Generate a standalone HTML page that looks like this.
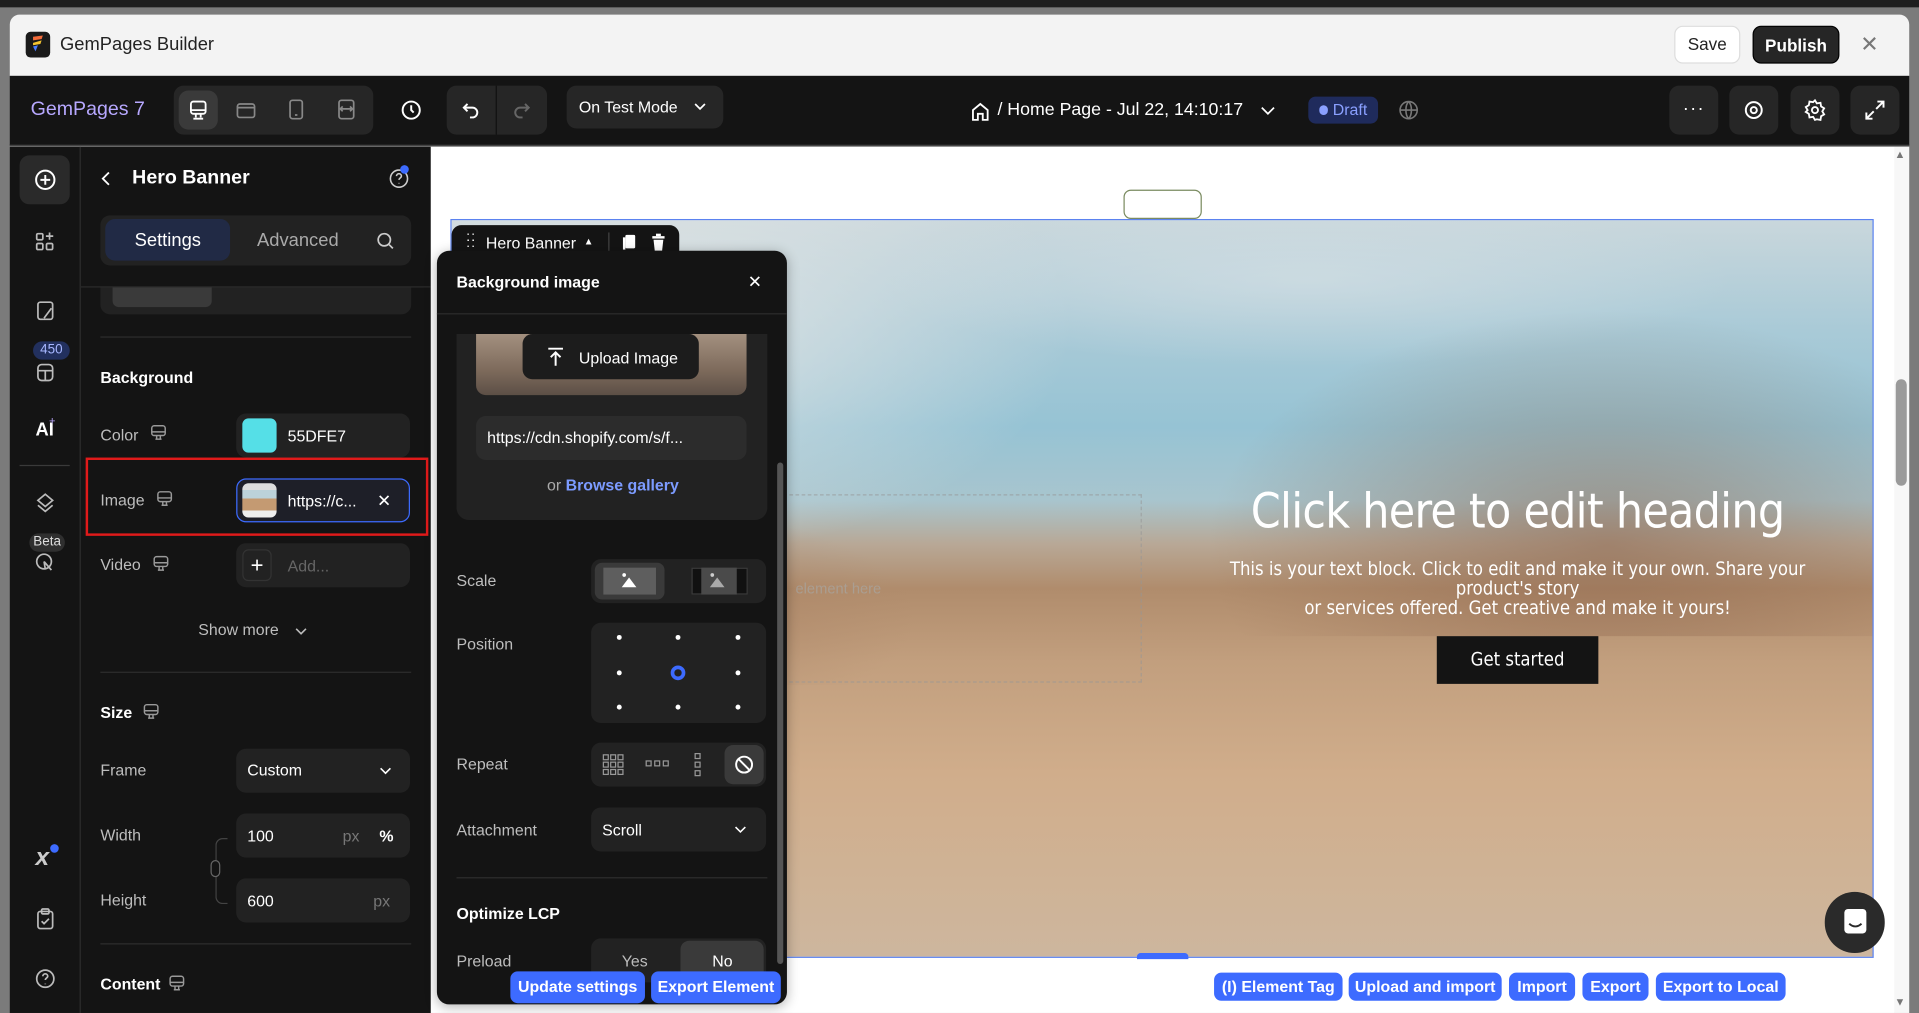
<!DOCTYPE html>
<html><head><meta charset="utf-8">
<style>
*{box-sizing:border-box;margin:0;padding:0}
html,body{width:1919px;height:1013px;overflow:hidden;background:#7a7a7a;font-family:"Liberation Sans",sans-serif}
#w{position:absolute;left:0;top:0;width:1568px;height:828px;transform:scale(1.22385,1.2234);transform-origin:0 0;background:#7b7b7b}
.a{position:absolute}
.t{color:#fff;font-size:13px}
.g{color:#bdbdbd;font-size:13px}
.box{position:absolute;background:#232323;border-radius:8px}
svg{position:absolute}
.btn{position:absolute;background:#3d6bff;color:#fff;font-size:13px;border-radius:6px;height:23px;line-height:23px;text-align:center;font-weight:bold}
.dot{position:absolute;width:4px;height:4px;border-radius:2px;background:#fff}
</style></head><body><div id="w">
<div class="a" style="left:0;top:0;width:1568px;height:6px;background:#1e1e1e"></div>
<div class="a" style="left:8px;top:12px;width:1552px;height:50px;background:#f3f3f3;border-radius:8px 8px 0 0"></div>
<div class="a" style="left:21px;top:26px;width:20px;height:21px;background:#1a1a1a;border-radius:4px"></div>
<svg style="left:24px;top:28px" width="14" height="16" viewBox="0 0 14 16"><path d="M3 2 L11 1 L10 4 L3 5Z" fill="#f36b3a"/><path d="M3 7 L10 5 L9 8 L3 9Z" fill="#f5c531"/><path d="M3 10 L7 9 L5 14Z" fill="#4a7cff"/></svg>
<div class="a" style="left:49px;top:28px;font-size:15px;color:#222">GemPages Builder</div>
<div class="a" style="left:1368px;top:21px;width:54px;height:31px;background:#fff;border:1px solid #ddd;border-radius:7px;font-size:14px;color:#222;text-align:center;line-height:29px">Save</div>
<div class="a" style="left:1432px;top:21px;width:71px;height:31px;background:#262626;border-radius:7px;font-size:14px;color:#fff;font-weight:bold;text-align:center;line-height:31px;border:1px solid #000">Publish</div>
<div class="a" style="left:1520px;top:26px;font-size:18px;color:#777">✕</div>
<div class="a" style="left:8px;top:62px;width:1552px;height:57px;background:#141414;border-bottom:1px solid #2b2b2b"></div>
<div class="a" style="left:25px;top:81px;font-size:16px;color:#b7a8ff">GemPages 7</div>
<div class="box" style="left:142px;top:70px;width:163px;height:40px;background:#262626"></div>
<div class="box" style="left:146px;top:74px;width:32px;height:32px;background:#3a3a3a"></div>
<svg style="left:152px;top:80px" width="20" height="20" viewBox="0 0 20 20" fill="none" stroke="#fff" stroke-width="1.5"><rect x="4" y="3" width="12" height="10" rx="2"/><path d="M4 10h12M8 13v3M12 13v3M6 17h8"/></svg>
<svg style="left:192px;top:81px" width="18" height="18" viewBox="0 0 18 18" fill="none" stroke="#888" stroke-width="1.4"><rect x="2" y="4" width="14" height="11" rx="2"/><path d="M2 7h14"/></svg>
<svg style="left:234px;top:80px" width="16" height="20" viewBox="0 0 16 20" fill="none" stroke="#888" stroke-width="1.4"><rect x="3" y="2" width="10" height="15" rx="2"/><path d="M7 14h2"/></svg>
<svg style="left:274px;top:80px" width="18" height="20" viewBox="0 0 18 20" fill="none" stroke="#888" stroke-width="1.4"><rect x="3" y="2" width="12" height="15" rx="2"/><path d="M5 9h8M6 7l-2 2 2 2M12 7l2 2-2 2"/></svg>
<svg style="left:326px;top:80px" width="20" height="20" viewBox="0 0 20 20" fill="none" stroke="#fff" stroke-width="1.6"><circle cx="10" cy="10" r="7"/><path d="M10 6v4l2 2"/></svg>
<div class="box" style="left:365px;top:70px;width:82px;height:40px;background:#262626"></div>
<div class="a" style="left:405px;top:70px;width:1px;height:40px;background:#111"></div>
<svg style="left:375px;top:80px" width="20" height="20" viewBox="0 0 20 20" fill="none" stroke="#fff" stroke-width="1.6"><path d="M7 5L4 8l3 3M4 8h7a4 4 0 010 8H9"/></svg>
<svg style="left:416px;top:80px" width="20" height="20" viewBox="0 0 20 20" fill="none" stroke="#666" stroke-width="1.6"><path d="M13 5l3 3-3 3M16 8H9a4 4 0 000 8h2"/></svg>
<div class="box" style="left:463px;top:70px;width:128px;height:35px;background:#262626"></div>
<div class="a t" style="left:473px;top:80px">On Test Mode</div>
<svg style="left:566px;top:82px" width="12" height="10" viewBox="0 0 12 10" fill="none" stroke="#fff" stroke-width="1.4"><path d="M2 3l4 4 4-4"/></svg>
<svg style="left:793px;top:82px" width="16" height="18" viewBox="0 0 16 18" fill="none" stroke="#fff" stroke-width="1.5"><path d="M2 8l6-5 6 5v8H10v-5H6v5H2z"/></svg>
<div class="a" style="left:815px;top:82px;font-size:14.5px;color:#fff">/ Home Page - Jul 22, 14:10:17</div>
<svg style="left:1029px;top:85px" width="14" height="10" viewBox="0 0 14 10" fill="none" stroke="#fff" stroke-width="1.4"><path d="M2 3l5 5 5-5"/></svg>
<div class="a" style="left:1069px;top:79px;width:57px;height:22px;background:#1f2b5c;border-radius:6px"></div>
<div class="a" style="left:1078px;top:86px;width:7px;height:8px;border-radius:4px;background:#8aa0ff"></div>
<div class="a" style="left:1089px;top:82px;font-size:13px;color:#8aa0ff">Draft</div>
<svg style="left:1142px;top:80px" width="18" height="20" viewBox="0 0 18 20" fill="none" stroke="#777" stroke-width="1.3"><circle cx="9" cy="10" r="7"/><path d="M2 10h14M9 3c-3 3-3 11 0 14M9 3c3 3 3 11 0 14"/></svg>
<div class="box" style="left:1364px;top:70px;width:40px;height:40px;background:#262626"></div>
<div class="a" style="left:1375px;top:80px;color:#fff;font-size:15px;letter-spacing:1px">···</div>
<div class="box" style="left:1413px;top:70px;width:40px;height:40px;background:#262626"></div>
<svg style="left:1423px;top:80px" width="20" height="20" viewBox="0 0 20 20" fill="none" stroke="#fff" stroke-width="1.6"><circle cx="10" cy="10" r="6.5"/><circle cx="10" cy="10" r="2.5"/></svg>
<div class="box" style="left:1463px;top:70px;width:40px;height:40px;background:#262626"></div>
<svg style="left:1473px;top:80px" width="20" height="20" viewBox="0 0 20 20" fill="none" stroke="#fff" stroke-width="1.5"><circle cx="10" cy="10" r="2.5"/><path d="M10 2l1.5 2.5 3-.5.5 3 2.5 1.5-1.5 2.5 1.5 2.5-2.5 1.5-.5 3-3-.5L10 18l-1.5-2.5-3 .5-.5-3L2.5 11.5 4 10 2.5 7.5 5 6l.5-3 3 .5z"/></svg>
<div class="box" style="left:1512px;top:70px;width:40px;height:40px;background:#262626"></div>
<svg style="left:1522px;top:80px" width="20" height="20" viewBox="0 0 20 20" fill="none" stroke="#fff" stroke-width="1.6"><path d="M12 3h5v5M17 3l-6 6M8 17H3v-5M3 17l6-6"/></svg>
<div class="a" style="left:8px;top:120px;width:58px;height:708px;background:#141414;border-right:1px solid #2b2b2b"></div>
<div class="box" style="left:16px;top:127px;width:41px;height:40px;background:#2a2a2a"></div>
<svg style="left:27px;top:137px" width="20" height="20" viewBox="0 0 20 20" fill="none" stroke="#fff" stroke-width="1.6"><circle cx="10" cy="10" r="7.5"/><path d="M10 6v8M6 10h8"/></svg>
<svg style="left:28px;top:188px" width="18" height="18" viewBox="0 0 18 18" fill="none" stroke="#bbb" stroke-width="1.4"><rect x="2" y="3" width="5" height="5" rx="1"/><rect x="2" y="11" width="5" height="5" rx="1"/><rect x="10" y="11" width="5" height="5" rx="1"/><path d="M12.5 2v6M9.5 5h6"/></svg>
<svg style="left:28px;top:245px" width="18" height="18" viewBox="0 0 18 18" fill="none" stroke="#bbb" stroke-width="1.4"><rect x="3" y="2" width="12" height="14" rx="2"/><path d="M8 15l6-8"/></svg>
<div class="a" style="left:27px;top:279px;width:30px;height:15px;background:#22305e;border-radius:8px;color:#a6b6ff;font-size:11px;text-align:center;line-height:15px">450</div>
<svg style="left:28px;top:295px" width="18" height="18" viewBox="0 0 18 18" fill="none" stroke="#bbb" stroke-width="1.4"><rect x="3" y="3" width="12" height="13" rx="3"/><path d="M3 8h12M9 8v8"/></svg>
<div class="a" style="left:29px;top:343px;color:#fff;font-size:15px;font-weight:bold">AI</div>
<div class="a" style="left:40px;top:339px;color:#bda9ff;font-size:9px">+</div>
<div class="a" style="left:16px;top:380px;width:41px;height:1px;background:#3a3a3a"></div>
<svg style="left:28px;top:402px" width="18" height="18" viewBox="0 0 18 18" fill="none" stroke="#bbb" stroke-width="1.4"><path d="M9 2l6 5-6 5-6-5zM3 11l6 5 6-5"/></svg>
<div class="a" style="left:24px;top:436px;width:29px;height:15px;background:#2f2f2f;border-radius:8px;color:#ddd;font-size:11px;text-align:center;line-height:15px">Beta</div>
<svg style="left:28px;top:451px" width="18" height="18" viewBox="0 0 18 18" fill="none" stroke="#bbb" stroke-width="1.4"><circle cx="8" cy="8" r="6"/><path d="M8 8l6 7M8 8l1 6"/></svg>
<div class="a" style="left:29px;top:690px;color:#ccc;font-size:20px;font-weight:bold;font-style:italic">x</div>
<div class="a" style="left:41px;top:690px;width:7px;height:7px;border-radius:4px;background:#3d6bff"></div>
<svg style="left:28px;top:741px" width="18" height="20" viewBox="0 0 18 20" fill="none" stroke="#bbb" stroke-width="1.4"><rect x="3" y="4" width="12" height="14" rx="2"/><rect x="6" y="2" width="6" height="4" rx="1"/><path d="M6 12l2 2 4-4"/></svg>
<svg style="left:28px;top:791px" width="18" height="18" viewBox="0 0 18 18" fill="none" stroke="#bbb" stroke-width="1.4"><circle cx="9" cy="9" r="7"/><path d="M7 7a2 2 0 114 0c0 1.5-2 1.5-2 3M9 13v.5"/></svg>
<div class="a" style="left:66px;top:120px;width:286px;height:708px;background:#141414"></div>
<svg style="left:80px;top:139px" width="14" height="14" viewBox="0 0 14 14" fill="none" stroke="#fff" stroke-width="1.5"><path d="M9 2L4 7l5 5"/></svg>
<div class="a" style="left:108px;top:137px;font-size:16px;color:#fff;font-weight:bold">Hero Banner</div>
<svg style="left:317px;top:137px" width="18" height="18" viewBox="0 0 18 18" fill="none" stroke="#ccc" stroke-width="1.3"><circle cx="9" cy="9" r="7"/><path d="M7 7a2 2 0 114 0c0 1.5-2 1.5-2 3M9 12.5v.5"/></svg>
<div class="a" style="left:327px;top:135px;width:7px;height:7px;border-radius:4px;background:#3d6bff"></div>
<div class="box" style="left:82px;top:176px;width:254px;height:41px;background:#222"></div>
<div class="box" style="left:86px;top:179px;width:102px;height:34px;background:#212a45"></div>
<div class="a" style="left:110px;top:188px;font-size:15px;color:#fff">Settings</div>
<div class="a" style="left:210px;top:188px;font-size:15px;color:#aaa">Advanced</div>
<svg style="left:307px;top:189px" width="16" height="16" viewBox="0 0 16 16" fill="none" stroke="#ccc" stroke-width="1.4"><circle cx="7" cy="7" r="5"/><path d="M11 11l3 3"/></svg>
<div class="a" style="left:66px;top:234px;width:286px;height:1px;background:#2b2b2b"></div>
<div class="box" style="left:82px;top:235px;width:254px;height:22px;background:#222;border-radius:0 0 8px 8px"></div>
<div class="a" style="left:92px;top:235px;width:81px;height:16px;background:#3a3a3a;border-radius:0 0 5px 5px"></div>
<div class="a" style="left:82px;top:275px;width:254px;height:1px;background:#2e2e2e"></div>
<div class="a t" style="left:82px;top:301px;font-weight:bold">Background</div>
<div class="a g" style="left:82px;top:348px">Color</div>
<svg style="left:122px;top:346px" width="15" height="15" viewBox="0 0 15 15" fill="none" stroke="#999" stroke-width="1.2"><rect x="2" y="2" width="11" height="8" rx="2"/><path d="M2 7h11M6 10v3M9 10v3M5 13h5"/></svg>
<div class="box" style="left:193px;top:338px;width:142px;height:36px;background:#222"></div>
<div class="a" style="left:198px;top:342px;width:28px;height:28px;background:#55dfe7;border-radius:5px"></div>
<div class="a t" style="left:235px;top:349px">55DFE7</div>
<div class="a" style="left:70px;top:374px;width:280px;height:64px;border:2px solid #e01a1a"></div>
<div class="a g" style="left:82px;top:401px">Image</div>
<svg style="left:127px;top:400px" width="15" height="15" viewBox="0 0 15 15" fill="none" stroke="#999" stroke-width="1.2"><rect x="2" y="2" width="11" height="8" rx="2"/><path d="M2 7h11M6 10v3M9 10v3M5 13h5"/></svg>
<div class="a" style="left:193px;top:391px;width:142px;height:36px;background:#1e1f28;border:1px solid #3d6bff;border-radius:8px"></div>
<div class="a" style="left:198px;top:395px;width:28px;height:28px;border-radius:5px;background:linear-gradient(#ddd 0 20%,#bcd2da 20% 45%,#c49a72 45% 80%,#eee 80%)"></div>
<div class="a t" style="left:235px;top:402px">https://c...</div>
<div class="a t" style="left:308px;top:401px;font-size:14px">✕</div>
<div class="a g" style="left:82px;top:454px">Video</div>
<svg style="left:124px;top:453px" width="15" height="15" viewBox="0 0 15 15" fill="none" stroke="#999" stroke-width="1.2"><rect x="2" y="2" width="11" height="8" rx="2"/><path d="M2 7h11M6 10v3M9 10v3M5 13h5"/></svg>
<div class="box" style="left:193px;top:444px;width:142px;height:36px;background:#222"></div>
<div class="a" style="left:198px;top:449px;width:24px;height:26px;border:1px solid #333;border-radius:5px;color:#fff;font-size:18px;text-align:center;line-height:24px">+</div>
<div class="a" style="left:235px;top:455px;font-size:13px;color:#666">Add...</div>
<div class="a g" style="left:162px;top:507px">Show more</div>
<svg style="left:240px;top:511px" width="12" height="10" viewBox="0 0 12 10" fill="none" stroke="#bbb" stroke-width="1.3"><path d="M2 3l4 4 4-4"/></svg>
<div class="a" style="left:82px;top:549px;width:254px;height:1px;background:#2e2e2e"></div>
<div class="a t" style="left:82px;top:575px;font-weight:bold">Size</div>
<svg style="left:116px;top:574px" width="15" height="15" viewBox="0 0 15 15" fill="none" stroke="#999" stroke-width="1.2"><rect x="2" y="2" width="11" height="8" rx="2"/><path d="M2 7h11M6 10v3M9 10v3M5 13h5"/></svg>
<div class="a g" style="left:82px;top:622px">Frame</div>
<div class="box" style="left:193px;top:612px;width:142px;height:36px;background:#222"></div>
<div class="a t" style="left:202px;top:622px">Custom</div>
<svg style="left:309px;top:625px" width="12" height="10" viewBox="0 0 12 10" fill="none" stroke="#fff" stroke-width="1.3"><path d="M2 3l4 4 4-4"/></svg>
<div class="a g" style="left:82px;top:675px">Width</div>
<div class="box" style="left:193px;top:665px;width:142px;height:36px;background:#222"></div>
<div class="a t" style="left:202px;top:676px">100</div>
<div class="a" style="left:280px;top:676px;font-size:13px;color:#777">px</div>
<div class="a t" style="left:310px;top:676px;font-weight:bold">%</div>
<div class="a" style="left:176px;top:685px;width:10px;height:54px;border:1px solid #444;border-right:none;border-radius:6px 0 0 6px"></div>
<div class="a" style="left:172px;top:703px;width:8px;height:14px;border:1px solid #666;border-radius:4px;background:#141414"></div>
<div class="a g" style="left:82px;top:728px">Height</div>
<div class="box" style="left:193px;top:718px;width:142px;height:36px;background:#222"></div>
<div class="a t" style="left:202px;top:729px">600</div>
<div class="a" style="left:305px;top:729px;font-size:13px;color:#777">px</div>
<div class="a" style="left:82px;top:771px;width:254px;height:1px;background:#2e2e2e"></div>
<div class="a t" style="left:82px;top:797px;font-weight:bold">Content</div>
<svg style="left:137px;top:796px" width="15" height="15" viewBox="0 0 15 15" fill="none" stroke="#999" stroke-width="1.2"><rect x="2" y="2" width="11" height="8" rx="2"/><path d="M2 7h11M6 10v3M9 10v3M5 13h5"/></svg>
<div class="a" style="left:352px;top:120px;width:1196px;height:708px;background:#fff"></div>
<div class="a" style="left:1548px;top:120px;width:12px;height:708px;background:#f7f7f7"></div>
<div class="a" style="left:1549px;top:310px;width:9px;height:87px;background:#9a9a9a;border-radius:5px"></div>
<div class="a" style="left:1548px;top:121px;font-size:9px;color:#777">▲</div>
<div class="a" style="left:1548px;top:814px;font-size:9px;color:#777">▼</div>
<div class="a" style="left:918px;top:155px;width:64px;height:24px;border:1px solid #7a8b60;border-radius:6px"></div>
<div class="a" style="left:368px;top:179px;width:1163px;height:604px;border:1px solid #5b82f0;overflow:hidden;background:linear-gradient(180deg,#c9d7dc 0%,#a9cad7 15%,#96c3d4 28%,#a8c5ce 38%,#b8a896 44%,#b08c6c 50%,#c29f7e 60%,#d0ad8b 75%,#cfb396 90%,#cdb69e 100%)">
<div class="a" style="left:-50px;top:-20px;width:560px;height:300px;background:radial-gradient(ellipse at 35% 35%,rgba(226,229,229,.95),rgba(220,225,226,0) 70%)"></div>
<div class="a" style="left:350px;top:0;width:700px;height:120px;background:radial-gradient(ellipse at 50% 40%,rgba(215,225,230,.6),rgba(215,225,230,0) 70%)"></div>
<div class="a" style="left:560px;top:40px;width:640px;height:300px;background:radial-gradient(ellipse at 60% 75%,rgba(140,100,75,.55),rgba(140,100,75,0) 60%)"></div>
<div class="a" style="left:0;top:240px;width:380px;height:140px;background:radial-gradient(ellipse at 50% 60%,rgba(170,130,100,.5),rgba(170,130,100,0) 70%)"></div>
</div>
<div class="a" style="left:600px;top:404px;width:333px;height:154px;border:1px dashed rgba(150,150,150,.6)"></div>
<div class="a" style="left:650px;top:474px;font-size:12px;color:rgba(170,160,150,.9)">element here</div>
<div class="a" style="left:960px;top:396px;width:560px;text-align:center;font-family:'DejaVu Sans Condensed','Liberation Sans Narrow',sans-serif;font-size:39px;color:#fff;letter-spacing:-0.6px;white-space:nowrap">Click here to edit heading</div>
<div class="a" style="left:975px;top:457px;width:530px;text-align:center;font-family:'DejaVu Sans Condensed','Liberation Sans Narrow',sans-serif;font-size:15px;color:#fff;line-height:16px">This is your text block. Click to edit and make it your own. Share your product's story<br>or services offered. Get creative and make it yours!</div>
<div class="a" style="left:1174px;top:520px;width:132px;height:39px;background:#141414;color:#fff;font-family:'DejaVu Sans Condensed',sans-serif;font-size:15px;text-align:center;line-height:39px">Get started</div>
<div class="a" style="left:1491px;top:729px;width:49px;height:50px;border-radius:25px;background:#2a2a2a"></div>
<svg style="left:1504px;top:741px" width="24" height="26" viewBox="0 0 24 26"><rect x="3" y="2" width="18" height="20" rx="3" fill="#fff"/><path d="M7 14c3 3 7 3 10 0" stroke="#2a2a2a" stroke-width="1.6" fill="none"/></svg>
<div class="a" style="left:929px;top:779px;width:42px;height:5px;background:#3d6bff;border-radius:3px 3px 0 0"></div>
<div class="btn" style="left:992px;top:795px;width:105px">(I) Element Tag</div>
<div class="btn" style="left:1102px;top:795px;width:125px">Upload and import</div>
<div class="btn" style="left:1233px;top:795px;width:54px">Import</div>
<div class="btn" style="left:1293px;top:795px;width:54px">Export</div>
<div class="btn" style="left:1353px;top:795px;width:106px">Export to Local</div>
<div class="a" style="left:369px;top:184px;width:186px;height:32px;background:#141414;border-radius:8px 8px 0 0"></div>
<div class="a" style="left:381px;top:192px;color:#fff;font-size:11px;line-height:5px;letter-spacing:1px">::<br>::</div>
<div class="a t" style="left:397px;top:191px">Hero Banner</div>
<div class="a" style="left:477px;top:193px;color:#fff;font-size:8px">▲</div>
<div class="a" style="left:497px;top:190px;width:1px;height:16px;background:#444"></div>
<svg style="left:507px;top:190px" width="14" height="16" viewBox="0 0 14 16" fill="#fff"><rect x="4" y="2" width="8" height="11" rx="1"/><rect x="2" y="4" width="2" height="10"/></svg>
<svg style="left:531px;top:190px" width="14" height="16" viewBox="0 0 14 16" fill="#fff"><rect x="2" y="3" width="10" height="2"/><rect x="5" y="1" width="4" height="2"/><path d="M3 6h8l-1 9H4z"/></svg>
<div class="a" style="left:357px;top:205px;width:286px;height:616px;background:#141414;border-radius:10px;box-shadow:0 2px 10px rgba(0,0,0,.3)"></div>
<div class="a t" style="left:373px;top:223px;font-weight:bold">Background image</div>
<div class="a t" style="left:611px;top:222px;font-size:14px">✕</div>
<div class="a" style="left:357px;top:256px;width:286px;height:1px;background:#2c2c2c"></div>
<div class="box" style="left:373px;top:273px;width:254px;height:152px;background:#222;border-radius:0 0 10px 10px"></div>
<div class="a" style="left:389px;top:273px;width:221px;height:50px;border-radius:0 0 8px 8px;background:linear-gradient(180deg,#a3907f,#7d6a5b 60%,#5c4f46)"></div>
<div class="a" style="left:427px;top:273px;width:144px;height:37px;background:#1c1c1c;border-radius:8px"></div>
<svg style="left:446px;top:283px" width="16" height="18" viewBox="0 0 16 18" fill="none" stroke="#fff" stroke-width="1.6"><path d="M2 2h12M8 16V5M4 9l4-4 4 4"/></svg>
<div class="a t" style="left:473px;top:285px">Upload Image</div>
<div class="box" style="left:389px;top:340px;width:221px;height:36px;background:#2c2c2c"></div>
<div class="a t" style="left:398px;top:350px">https://cdn.shopify.com/s/f...</div>
<div class="a" style="left:447px;top:389px;font-size:13px;color:#aaa">or <span style="color:#7c9bff;font-weight:bold">Browse gallery</span></div>
<div class="a" style="left:635px;top:378px;width:5px;height:410px;background:#555;border-radius:3px"></div>
<div class="a g" style="left:373px;top:467px">Scale</div>
<div class="box" style="left:483px;top:457px;width:143px;height:36px;background:#222"></div>
<div class="a" style="left:486px;top:460px;width:57px;height:30px;background:#3a3a3a;border-radius:6px"></div>
<div class="a" style="left:493px;top:464px;width:43px;height:22px;background:#5e5e5e"></div>
<svg style="left:506px;top:467px" width="18" height="14" viewBox="0 0 18 14"><circle cx="4" cy="3" r="1.5" fill="#fff"/><path d="M2 13l6-8 6 8z" fill="#fff"/></svg>
<div class="a" style="left:565px;top:464px;width:46px;height:22px;border:1px solid #3a3a3a;background:#111"></div>
<div class="a" style="left:573px;top:464px;width:29px;height:22px;background:#4a4a4a"></div>
<svg style="left:578px;top:467px" width="18" height="14" viewBox="0 0 18 14"><circle cx="4" cy="3" r="1.5" fill="#ccc"/><path d="M2 13l6-8 6 8z" fill="#aaa"/></svg>
<div class="a g" style="left:373px;top:519px">Position</div>
<div class="box" style="left:483px;top:509px;width:143px;height:82px;background:#222"></div>
<div class="dot" style="left:504px;top:519px"></div><div class="dot" style="left:552px;top:519px"></div><div class="dot" style="left:601px;top:519px"></div>
<div class="dot" style="left:504px;top:548px"></div><div class="dot" style="left:601px;top:548px"></div>
<div class="a" style="left:548px;top:544px;width:12px;height:12px;border-radius:6px;border:3px solid #3d6bff"></div>
<div class="dot" style="left:504px;top:576px"></div><div class="dot" style="left:552px;top:576px"></div><div class="dot" style="left:601px;top:576px"></div>
<div class="a g" style="left:373px;top:617px">Repeat</div>
<div class="box" style="left:483px;top:607px;width:143px;height:36px;background:#222"></div>
<svg style="left:492px;top:616px" width="18" height="18" viewBox="0 0 18 18" fill="none" stroke="#999" stroke-width="1"><rect x="1" y="1" width="4" height="4"/><rect x="7" y="1" width="4" height="4"/><rect x="13" y="1" width="4" height="4"/><rect x="1" y="7" width="4" height="4"/><rect x="7" y="7" width="4" height="4"/><rect x="13" y="7" width="4" height="4"/><rect x="1" y="13" width="4" height="4"/><rect x="7" y="13" width="4" height="4"/><rect x="13" y="13" width="4" height="4"/></svg>
<svg style="left:527px;top:621px" width="20" height="8" viewBox="0 0 20 8" fill="none" stroke="#999" stroke-width="1"><rect x="1" y="1" width="4" height="4"/><rect x="8" y="1" width="4" height="4"/><rect x="15" y="1" width="4" height="4"/></svg>
<svg style="left:567px;top:615px" width="8" height="20" viewBox="0 0 8 20" fill="none" stroke="#999" stroke-width="1"><rect x="1" y="1" width="4" height="4"/><rect x="1" y="8" width="4" height="4"/><rect x="1" y="15" width="4" height="4"/></svg>
<div class="a" style="left:592px;top:609px;width:32px;height:32px;background:#3a3a3a;border-radius:7px"></div>
<svg style="left:599px;top:616px" width="18" height="18" viewBox="0 0 18 18" fill="none" stroke="#fff" stroke-width="1.6"><circle cx="9" cy="9" r="6.5"/><path d="M4.5 4.5l9 9"/></svg>
<div class="a g" style="left:373px;top:671px">Attachment</div>
<div class="box" style="left:483px;top:660px;width:143px;height:36px;background:#222"></div>
<div class="a t" style="left:492px;top:671px">Scroll</div>
<svg style="left:599px;top:673px" width="12" height="10" viewBox="0 0 12 10" fill="none" stroke="#fff" stroke-width="1.3"><path d="M2 3l4 4 4-4"/></svg>
<div class="a" style="left:373px;top:717px;width:254px;height:1px;background:#2e2e2e"></div>
<div class="a t" style="left:373px;top:739px;font-weight:bold">Optimize LCP</div>
<div class="a g" style="left:373px;top:778px">Preload</div>
<div class="box" style="left:483px;top:767px;width:143px;height:36px;background:#222"></div>
<div class="a g" style="left:508px;top:778px">Yes</div>
<div class="a" style="left:556px;top:769px;width:68px;height:34px;background:#3a3a3a;border-radius:7px"></div>
<div class="a t" style="left:582px;top:778px">No</div>
<div class="btn" style="left:417px;top:794px;width:110px;height:26px;line-height:26px">Update settings</div>
<div class="btn" style="left:532px;top:794px;width:106px;height:26px;line-height:26px">Export Element</div>
</div></body></html>
